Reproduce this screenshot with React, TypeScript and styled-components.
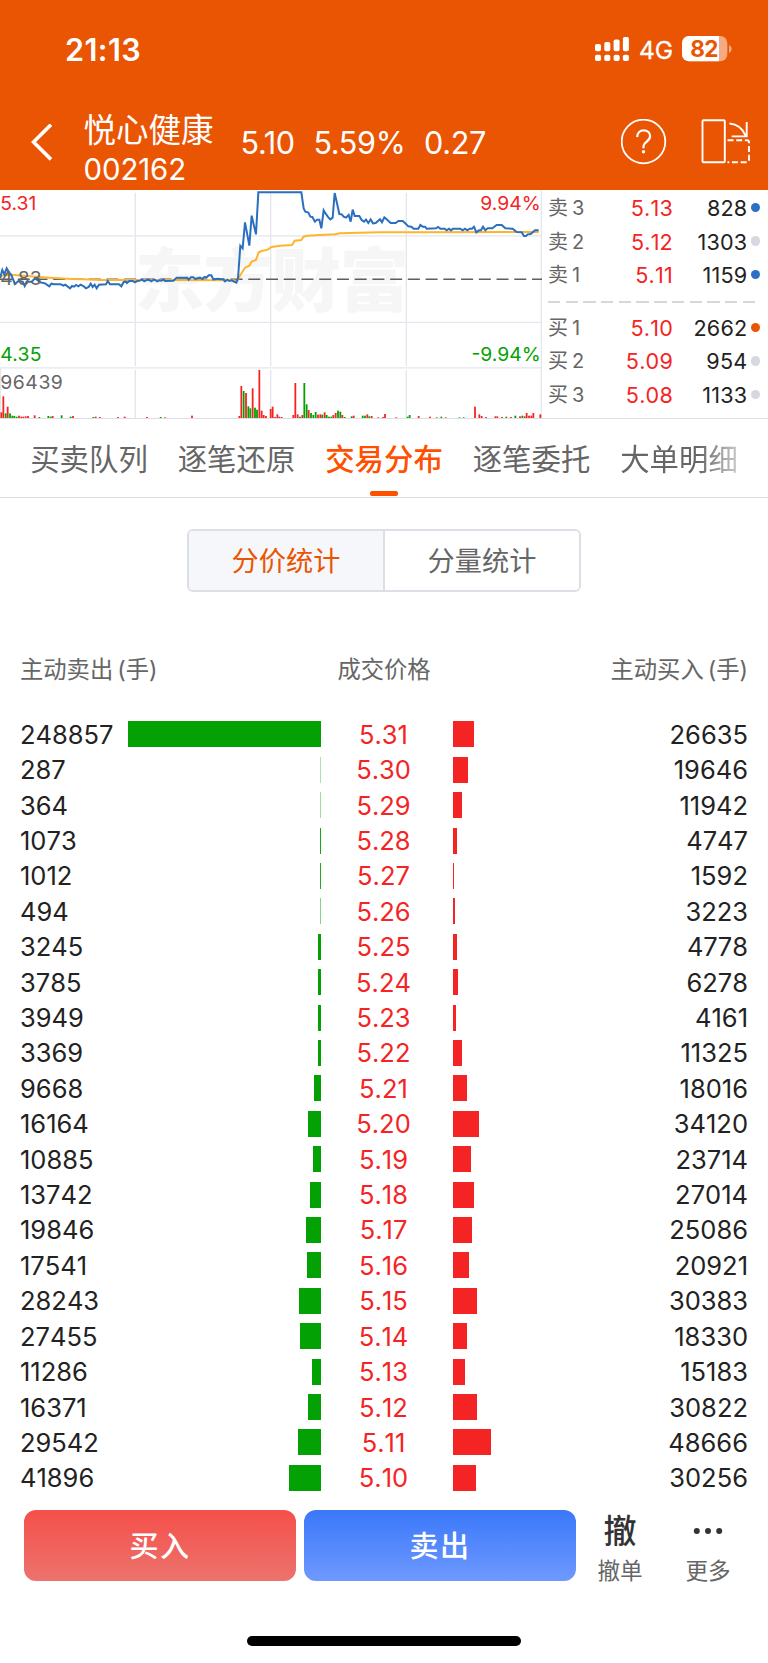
import React from 'react';
import styled, { createGlobalStyle } from 'styled-components';

const Global = createGlobalStyle`
  * { box-sizing: border-box; }
  body {
    margin: 0;
    background: #fff;
    font-family: Inter, "Noto Sans CJK SC", sans-serif;
    color: #333;
  }
`;

const C = {
  orange: '#ea5504',
  tab: '#ff5000',
  red: '#f52424',
  green: '#04a104',
  grey: '#666',
  line: '#dcdfe6',
};

const Page = styled.div`
  width: 768px;
  height: 1663px;
  display: flex;
  flex-direction: column;
  overflow: hidden;
  white-space: nowrap;
`;

const Header = styled.header`
  height: 190px;
  background: ${C.orange};
  color: #fff;
  flex: none;
`;

const StatusBar = styled.div`
  height: 98px;
  padding: 0 36px 0 65px;
  display: flex;
  align-items: center;
  justify-content: space-between;
`;

const Clock = styled.span`
  font-size: 30.6px;
  font-weight: 600;
  letter-spacing: 0.4px;
`;

const NavBar = styled.div`
  height: 92px;
  padding: 0 17px 0 31px;
  display: flex;
  align-items: center;
`;

const Stock = styled.div`
  width: 157px;
  margin-left: 30.5px;
  padding-top: 12px;
`;

const StockName = styled.div`
  font-size: 32.5px;
  line-height: 40px;
`;

const StockCode = styled.div`
  font-size: 29.4px;
  line-height: 38px;
  letter-spacing: -0.1px;
`;

const Quote = styled.div`
  display: flex;
  gap: 18.6px;
  flex: 1;
  font-size: 30.6px;
  letter-spacing: -0.35px;
  padding-bottom: 4px;
`;

const NavIcons = styled.div`
  display: flex;
  gap: 34px;
  padding-bottom: 4px;
`;

const Market = styled.section`
  height: 229px;
  flex: none;
  display: flex;
  border-bottom: 1.4px solid ${C.line};
`;

const Chart = styled.svg`
  width: 542px;
  height: 229px;
  flex: none;
  font-size: 58px;
`;

const Book = styled.div`
  flex: 1;
  padding: 2px 7px 0 6px;
`;

const BookRow = styled.div`
  height: 33.45px;
  display: grid;
  grid-template-columns: 48px 77px 74.4px 14px;
  align-items: center;
  font-size: 21.6px;
  line-height: 33px;
  letter-spacing: 0.2px;
  font-kerning: none;
`;

const Level = styled.span`
  color: ${C.grey};
  font-size: 20px;
  word-spacing: -2px;
`;

const BookPrice = styled.span`
  color: ${C.red};
  text-align: right;
`;

const BookVolume = styled.span`
  color: #222;
  text-align: right;
`;

const Dot = styled.i<{ $color: string }>`
  width: 9.4px;
  height: 9.4px;
  margin-left: 3.4px;
  margin-bottom: 2px;
  border-radius: 50%;
  background: ${(p) => p.$color};
`;

const BookDivider = styled.div`
  height: 2px;
  margin: 8.5px 6px 9px 0;
  background: repeating-linear-gradient(90deg, #d5d7de 0 12.3px, transparent 12.3px 17.7px);
`;

const Tabs = styled.nav`
  height: 79px;
  flex: none;
  padding-left: 30px;
  display: flex;
  gap: 29.5px;
  border-bottom: 1.4px solid ${C.line};
`;

const Tab = styled.div<{ $active?: boolean; $faded?: boolean }>`
  width: 118px;
  height: 78px;
  display: flex;
  flex-direction: column;
  align-items: center;
  justify-content: space-between;
  font-size: 29.4px;
  line-height: 82px;
  font-weight: ${(p) => (p.$active ? 500 : 400)};
  color: ${(p) => (p.$active ? C.tab : C.grey)};
  ${(p) => p.$faded && 'mask-image: linear-gradient(90deg, #000 66%, rgba(0,0,0,.35) 100%);'}
`;

const TabLabel = styled.span`
  height: 72px;
`;

const Underline = styled.i`
  width: 28px;
  height: 4.6px;
  border-radius: 2px;
  margin-bottom: 1.2px;
  background: ${C.tab};
`;

const Segment = styled.div`
  width: 394px;
  height: 63px;
  margin: 31px auto 0;
  flex: none;
  display: flex;
  border: 2px solid ${C.line};
  border-radius: 6px;
  overflow: hidden;
`;

const SegmentItem = styled.div<{ $active?: boolean }>`
  flex: 1;
  line-height: 62px;
  text-align: center;
  font-size: 27.2px;
  color: ${(p) => (p.$active ? C.orange : C.grey)};
  background: ${(p) => (p.$active ? '#f6f7fa' : '#fff')};
  & + & { border-left: 2px solid ${C.line}; }
`;

const ColumnHeads = styled.div`
  flex: none;
  margin-top: 58px;
  height: 40px;
  padding: 0 20px;
  display: grid;
  grid-template-columns: 1fr 1fr 1fr;
  font-size: 23.3px;
  line-height: 40px;
  color: ${C.grey};
`;

const Head = styled.span<{ $align: string }>`
  text-align: ${(p) => p.$align};
`;

const Paren = styled.span`
  margin-left: 4px;
`;

const Rows = styled.div`
  flex: none;
  margin-top: 26.6px;
`;

const Row = styled.div`
  height: 35.42px;
  padding: 0 20px;
  display: grid;
  grid-template-columns: 108px 193px 132px 193px 1fr;
  align-items: center;
  font-size: 25.5px;
  line-height: 35px;
  color: #222;
  font-kerning: none;
`;

const Price = styled.span`
  text-align: center;
  padding-right: 7px;
  color: ${C.red};
`;

const BuyVolume = styled.span`
  text-align: right;
`;

const Bar = styled.i<{ $side: 'sell' | 'buy' }>`
  height: 26px;
  justify-self: ${(p) => (p.$side === 'sell' ? 'end' : 'start')};
  background: ${(p) => (p.$side === 'sell' ? C.green : C.red)};
`;

const Actions = styled.footer`
  flex: none;
  margin-top: 14px;
  height: 71px;
  padding-left: 24px;
  display: flex;
`;

const TradeButton = styled.button<{ $from: string; $to: string }>`
  width: 272px;
  height: 71px;
  margin-right: 8px;
  border: 0;
  border-radius: 12px;
  background: linear-gradient(${(p) => p.$from}, ${(p) => p.$to});
  color: #fff;
  font: 500 29px/73px Inter, "Noto Sans CJK SC", sans-serif;
  letter-spacing: 1.6px;
  padding: 0;
`;

const ToolItem = styled.div`
  width: 88px;
  display: flex;
  flex-direction: column;
  align-items: center;
  font-size: 22.6px;
  line-height: 38px;
  color: ${C.grey};
  margin-left: -8px;
  & + & { margin-left: 0; }
`;

const ToolIcon = styled.div`
  flex: none;
  height: 42px;
  display: flex;
  align-items: center;
  font-size: 33px;
  font-weight: 500;
  color: #333;
`;

const HomeBar = styled.div`
  flex: none;
  width: 274px;
  height: 10px;
  margin: 55px auto 0;
  border-radius: 5px;
  background: #000;
`;

const asks: [string, string, string, string][] = [
  ['卖 3', '5.13', '828', '#2d6fc4'],
  ['卖 2', '5.12', '1303', '#d5d8df'],
  ['卖 1', '5.11', '1159', '#2d6fc4'],
];
const bids: [string, string, string, string][] = [
  ['买 1', '5.10', '2662', '#ea5504'],
  ['买 2', '5.09', '954', '#d5d8df'],
  ['买 3', '5.08', '1133', '#d5d8df'],
];

const trades: [number, string, number][] = [
  [248857, '5.31', 26635], [287, '5.30', 19646], [364, '5.29', 11942], [1073, '5.28', 4747],
  [1012, '5.27', 1592], [494, '5.26', 3223], [3245, '5.25', 4778], [3785, '5.24', 6278],
  [3949, '5.23', 4161], [3369, '5.22', 11325], [9668, '5.21', 18016], [16164, '5.20', 34120],
  [10885, '5.19', 23714], [13742, '5.18', 27014], [19846, '5.17', 25086], [17541, '5.16', 20921],
  [28243, '5.15', 30383], [27455, '5.14', 18330], [11286, '5.13', 15183], [16371, '5.12', 30822],
  [29542, '5.11', 48666], [41896, '5.10', 30256],
];

// Bars thinner than one pixel keep a 1px width and fade instead.
const barStyle = (v: number) => {
  const w = (v / 248857) * 193;
  return { width: Math.max(1, w), opacity: Math.min(1, w + 0.1) };
};

const priceLine =
  '0,280 7,255 13,268 20,250 27,262 33,268 40,285 45,297 55,288 68,290 74,303 80,290 95,290 105,280 112,285 120,292 135,295 148,304 154,296 162,298 182,298 190,302 196,299 210,310 216,303 222,305 228,300 235,304 242,299 250,303 258,310 266,306 272,296 278,306 284,299 290,310 297,299 318,298 323,288 330,298 357,298 364,304 371,291 378,290 381,294 388,288 398,288 405,292 412,288 420,287 425,283 433,289 440,285 446,284 454,289 462,283 472,289 478,286 485,287 490,283 495,288 520,287 530,278 562,278 566,284 573,277 580,277 586,282 594,279 600,278 607,282 613,276 620,277 626,271 634,271 640,283 655,281 662,283 670,283 675,289 682,284 688,288 695,286 702,290 709,293 714,280 721,182 728,190 735,112 748,182 755,92 768,148 775,22 904,22 911,70 916,80 925,83 931,95 937,96 945,110 951,104 958,104 964,130 971,76 977,86 985,97 991,103 998,98 1004,24 1011,55 1018,87 1025,88 1031,95 1038,98 1046,90 1052,110 1058,74 1064,93 1078,93 1085,105 1092,110 1098,104 1105,114 1112,103 1119,115 1127,114 1140,103 1146,112 1153,97 1160,103 1172,114 1187,114 1195,108 1208,108 1215,114 1225,124 1234,125 1241,131 1255,131 1261,120 1268,125 1275,125 1280,131 1308,130 1314,126 1321,131 1334,131 1340,136 1347,131 1353,136 1359,131 1381,131 1388,136 1395,131 1402,136 1409,131 1416,131 1422,125 1429,142 1437,136 1443,136 1449,125 1456,136 1463,130 1477,130 1490,120 1505,120 1516,130 1538,131 1550,141 1565,142 1572,153 1578,153 1583,148 1592,147 1605,136 1616,136';
const averageLine =
  '0,279 5,273 13,270 42,270 80,273 150,278 215,282 250,283 300,285 400,285 700,286 712,288 721,270 735,248 748,242 755,230 768,225 776,202 785,198 803,194 815,186 840,182 876,180 884,167 904,165 911,155 922,152 960,150 1005,148 1020,145 1140,142 1230,142 1616,141';

const volumes =
  '4,682r 10,634r 17,685g 23,665r 30,685g 37,692g 43,693g 50,695g 57,692r 64,695r 70,695r 77,694r 84,693r 104,691r 118,696g 145,693g 152,695g 158,693r 185,691g 212,695g 219,693r 280,696g 287,695r 300,696r 354,696r 374,695r 441,696r 482,696g 495,697r 576,692r 718,693r 724,603r 731,618g 738,624r 745,664g 751,670g 758,610r 765,668g 771,674g 778,555r 785,677r 791,690r 798,693r 812,672r 818,665r 825,696r 832,688r 838,695r 845,696r 880,690r 886,594r 893,688r 900,695g 907,690r 913,594g 920,658g 926,675r 933,684g 940,690g 947,681g 954,689r 961,688r 967,689g 974,682r 980,690g 987,695g 994,695g 1000,690r 1007,684r 1014,677g 1021,680g 1027,690r 1034,696g 1055,694g 1061,692r 1088,692g 1095,692g 1102,688r 1108,694g 1115,693r 1135,697r 1149,696r 1155,687r 1189,697r 1223,695g 1229,690g 1256,693r 1290,695r 1310,697r 1324,695g 1337,697r 1378,697g 1391,697g 1425,665r 1438,688r 1445,693r 1458,696r 1486,694r 1492,694r 1506,696r 1519,695g 1533,696r 1546,692g 1560,694r 1567,692g 1574,694r 1580,684r 1587,692r 1594,692r 1600,684r 1621,688r'
    .split(' ')
    .map((s) => {
      const [x, y] = s.slice(0, -1).split(',').map(Number);
      return { x, y, up: s.endsWith('r') };
    });

const MinuteChart = () => (
  <Chart viewBox="0 15 1626 687">
    <text x="405" y="362" fontSize="208" fontWeight="900" fill="#f6f6f6" textLength="822">东方财富</text>
    <g stroke="#e4e6ee" strokeWidth="4" fill="none">
      <path d="M0 152.500H1626M0 412H1626M0 548.500H1626" />
      <path d="M406 23V543M812 23V543M1219 23V543M406 555V700M812 555V700M1219 555V700" />
      <path d="M1624 15V700M1.500 548V700" />
    </g>
    <path d="M0 282.500H1626" stroke="#5e5e5e" strokeWidth="4.500" strokeDasharray="36 17.200" />
    {volumes.map((v) => (
      <rect key={v.x} x={v.x - 2.7} y={v.y} width="5.4" height={699 - v.y} fill={v.up ? C.red : C.green} />
    ))}
    <polyline points={averageLine} fill="none" stroke="#ffb42d" strokeWidth="6" />
    <polyline points={priceLine} fill="none" stroke="#2a6fc0" strokeWidth="6" />
    <text x="1" y="75" fill={C.red}>5.31</text>
    <text x="1" y="299" fill="#666" letterSpacing="0.600">4.83</text>
    <text x="1" y="527" fill={C.green} letterSpacing="0.600">4.35</text>
    <text x="1" y="611" fill="#666" letterSpacing="1.600">96439</text>
    <text x="1622" y="75" fill={C.red} textAnchor="end">9.94%</text>
    <text x="1622" y="527" fill={C.green} textAnchor="end">-9.94%</text>
  </Chart>
);

const StatusIcons = () => (
  <svg width="140" height="30" viewBox="592 34 140 30" fill="#fff">
    {[0, 1, 2, 3].map((i) => {
      const top = [44, 42, 39.5, 37][i];
      return (
        <g key={i}>
          <rect x={595 + i * 9.3} y={top} width="6" height={51.3 - top} rx="1.8" />
          <rect x={595 + i * 9.3} y="54.7" width="6" height="6.3" rx="1.8" />
        </g>
      );
    })}
    <text x="639" y="58.500" fontSize="24.500" letterSpacing="-0.2" stroke="#fff" strokeWidth=".3">4G</text>
    <clipPath id="battery"><rect x="682" y="36" width="45.300" height="25.200" rx="7" /></clipPath>
    <g clipPath="url(#battery)">
      <rect x="682" y="36" width="46" height="26" fillOpacity=".5" />
      <rect x="682" y="36" width="37" height="26" />
    </g>
    <path d="M729 45.200c3.500 1.200 3.500 6.400 0 7.600z" fillOpacity=".5" />
    <text x="704" y="57" fontSize="22.500" fontWeight="700" fill={C.orange} textAnchor="middle" letterSpacing="-0.6">82</text>
  </svg>
);

const BookRows = ({ rows }: { rows: [string, string, string, string][] }) => (
  <>
    {rows.map(([level, price, volume, color]) => (
      <BookRow key={level}>
        <Level>{level}</Level>
        <BookPrice>{price}</BookPrice>
        <BookVolume>{volume}</BookVolume>
        <Dot $color={color} />
      </BookRow>
    ))}
  </>
);

export default function App() {
  return (
    <Page>
      <Global />
      <Header>
        <StatusBar>
          <Clock>21:13</Clock>
          <StatusIcons />
        </StatusBar>
        <NavBar>
          <svg width="22" height="40" viewBox="0 0 22 40" fill="none" stroke="#fff" strokeWidth="3.600">
            <path d="M20 .6L2.500 18L20 35.400" />
          </svg>
          <Stock>
            <StockName>悦心健康</StockName>
            <StockCode>002162</StockCode>
          </Stock>
          <Quote>
            <span>5.10</span>
            <span>5.59%</span>
            <span>0.27</span>
          </Quote>
          <NavIcons>
            <svg width="46" height="46" viewBox="0 0 46 46" fill="none" stroke="#fff" strokeWidth="1.800">
              <circle cx="22.500" cy="22.500" r="21.800" />
              <path d="M16.200 18c0-4 2.700-6.700 6.500-6.700s6.400 2.500 6.400 5.700c0 2.700-1.400 4.100-3.400 5.700-2.300 1.700-3.200 2.800-3.200 5.300v1.300" strokeWidth="2.200" />
              <circle cx="22.500" cy="32.800" r="1.700" fill="#fff" stroke="none" />
            </svg>
            <svg width="50" height="46" viewBox="701.500 119 50 46" fill="none" stroke="#fff" strokeWidth="1.900">
              <rect x="703" y="120.300" width="22.300" height="42" rx="1" />
              <path d="M730 123.500c7 .5 13 4.500 16.300 12.500M747.200 122v14.400h-15" />
              <path d="M728 140.200h19.500a2 2 0 0 1 2 2v18a2 2 0 0 1-2 2H728" strokeDasharray="6 2.700" />
            </svg>
          </NavIcons>
        </NavBar>
      </Header>
      <Market>
        <MinuteChart />
        <Book>
          <BookRows rows={asks} />
          <BookDivider />
          <BookRows rows={bids} />
        </Book>
      </Market>
      <Tabs>
        <Tab><TabLabel>买卖队列</TabLabel></Tab>
        <Tab><TabLabel>逐笔还原</TabLabel></Tab>
        <Tab $active><TabLabel>交易分布</TabLabel><Underline /></Tab>
        <Tab><TabLabel>逐笔委托</TabLabel></Tab>
        <Tab $faded><TabLabel>大单明细</TabLabel></Tab>
      </Tabs>
      <Segment>
        <SegmentItem $active>分价统计</SegmentItem>
        <SegmentItem>分量统计</SegmentItem>
      </Segment>
      <ColumnHeads>
        <Head $align="left">主动卖出<Paren>(手)</Paren></Head>
        <Head $align="center">成交价格</Head>
        <Head $align="right">主动买入<Paren>(手)</Paren></Head>
      </ColumnHeads>
      <Rows>
        {trades.map(([sell, price, buy]) => (
          <Row key={price}>
            <span>{sell}</span>
            <Bar $side="sell" style={barStyle(sell)} />
            <Price>{price}</Price>
            <Bar $side="buy" style={barStyle(buy)} />
            <BuyVolume>{buy}</BuyVolume>
          </Row>
        ))}
      </Rows>
      <Actions>
        <TradeButton $from="#f54f4a" $to="#ec736d">买入</TradeButton>
        <TradeButton $from="#3a78fa" $to="#6f99ff">卖出</TradeButton>
        <ToolItem>
          <ToolIcon>撤</ToolIcon>
          撤单
        </ToolItem>
        <ToolItem>
          <ToolIcon>
            <svg width="30" height="8" fill="#333">
              <circle cx="3.800" cy="4" r="3" />
              <circle cx="15" cy="4" r="3" />
              <circle cx="26.200" cy="4" r="3" />
            </svg>
          </ToolIcon>
          更多
        </ToolItem>
      </Actions>
      <HomeBar />
    </Page>
  );
}
